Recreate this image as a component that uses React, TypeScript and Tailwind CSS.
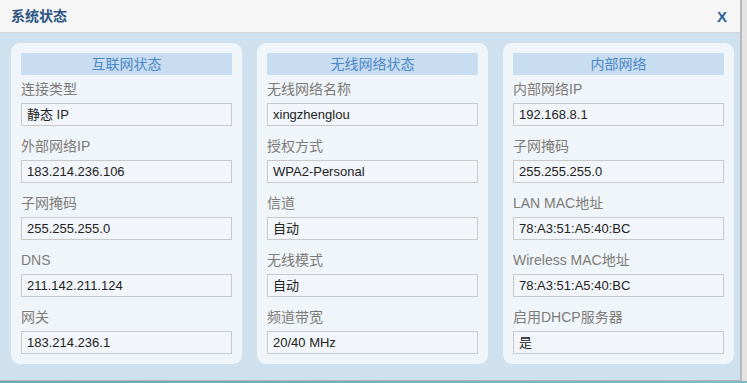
import React from "react";

type Field = { label: string; value: string };
type Panel = { title: string; fields: Field[] };

const panels: Panel[] = [
  {
    title: "互联网状态",
    fields: [
      { label: "连接类型", value: "静态 IP" },
      { label: "外部网络IP", value: "183.214.236.106" },
      { label: "子网掩码", value: "255.255.255.0" },
      { label: "DNS", value: "211.142.211.124" },
      { label: "网关", value: "183.214.236.1" },
    ],
  },
  {
    title: "无线网络状态",
    fields: [
      { label: "无线网络名称", value: "xingzhenglou" },
      { label: "授权方式", value: "WPA2-Personal" },
      { label: "信道", value: "自动" },
      { label: "无线模式", value: "自动" },
      { label: "频道带宽", value: "20/40 MHz" },
    ],
  },
  {
    title: "内部网络",
    fields: [
      { label: "内部网络IP", value: "192.168.8.1" },
      { label: "子网掩码", value: "255.255.255.0" },
      { label: "LAN MAC地址", value: "78:A3:51:A5:40:BC" },
      { label: "Wireless MAC地址", value: "78:A3:51:A5:40:BC" },
      { label: "启用DHCP服务器", value: "是" },
    ],
  },
];

const font = { fontFamily: '"Liberation Sans", Arial, "Noto Sans CJK SC", sans-serif' };

export default function App() {
  return (
    <div className="w-[747px] h-[383px] bg-[#e4e4e4] flex flex-col overflow-hidden" style={font}>
      <div className="flex flex-1 min-h-0">
        <div className="w-[742px] flex flex-col border-r-2 border-[#b9b9b9]">
          <div className="h-[33px] bg-[#f6f6f6] border-b border-[#d6d6d6] flex items-center justify-between pl-[11px] pr-[13px]">
            <span className="text-[14px] font-bold text-[#2c5483]">系统状态</span>
            <span className="text-[15px] font-bold text-[#2e6099] leading-none">X</span>
          </div>
          <div className="flex-1 bg-[#cfe0ef] pl-[11px] pt-[10px] flex gap-[15px] items-start border-b border-[#b4b4b4]">
            {panels.map((p) => (
              <div key={p.title} className="w-[231px] bg-[#f0f5fa] rounded-[9px] px-[10px] pt-[10px] pb-[10px]">
                <div className="h-[22px] bg-[#c8ddf0] flex items-center justify-center text-[14px] text-[#4a88c7]">
                  {p.title}
                </div>
                {p.fields.map((f, i) => (
                  <div key={f.label} className={i === 0 ? "" : "mt-[6px]"}>
                    <div className="h-[28px] leading-[28px] text-[14px] text-[#7e7b78]">{f.label}</div>
                    <div className="h-[23px] border border-[#c9c9c9] bg-[#f2f6fa] pl-[5px] flex items-center text-[13px] text-[#222]">
                      {f.value}
                    </div>
                  </div>
                ))}
              </div>
            ))}
          </div>
        </div>
      </div>
      <div className="h-[2px] bg-gradient-to-r from-[#6aa9b8] to-[#7fbac4]" />
    </div>
  );
}
